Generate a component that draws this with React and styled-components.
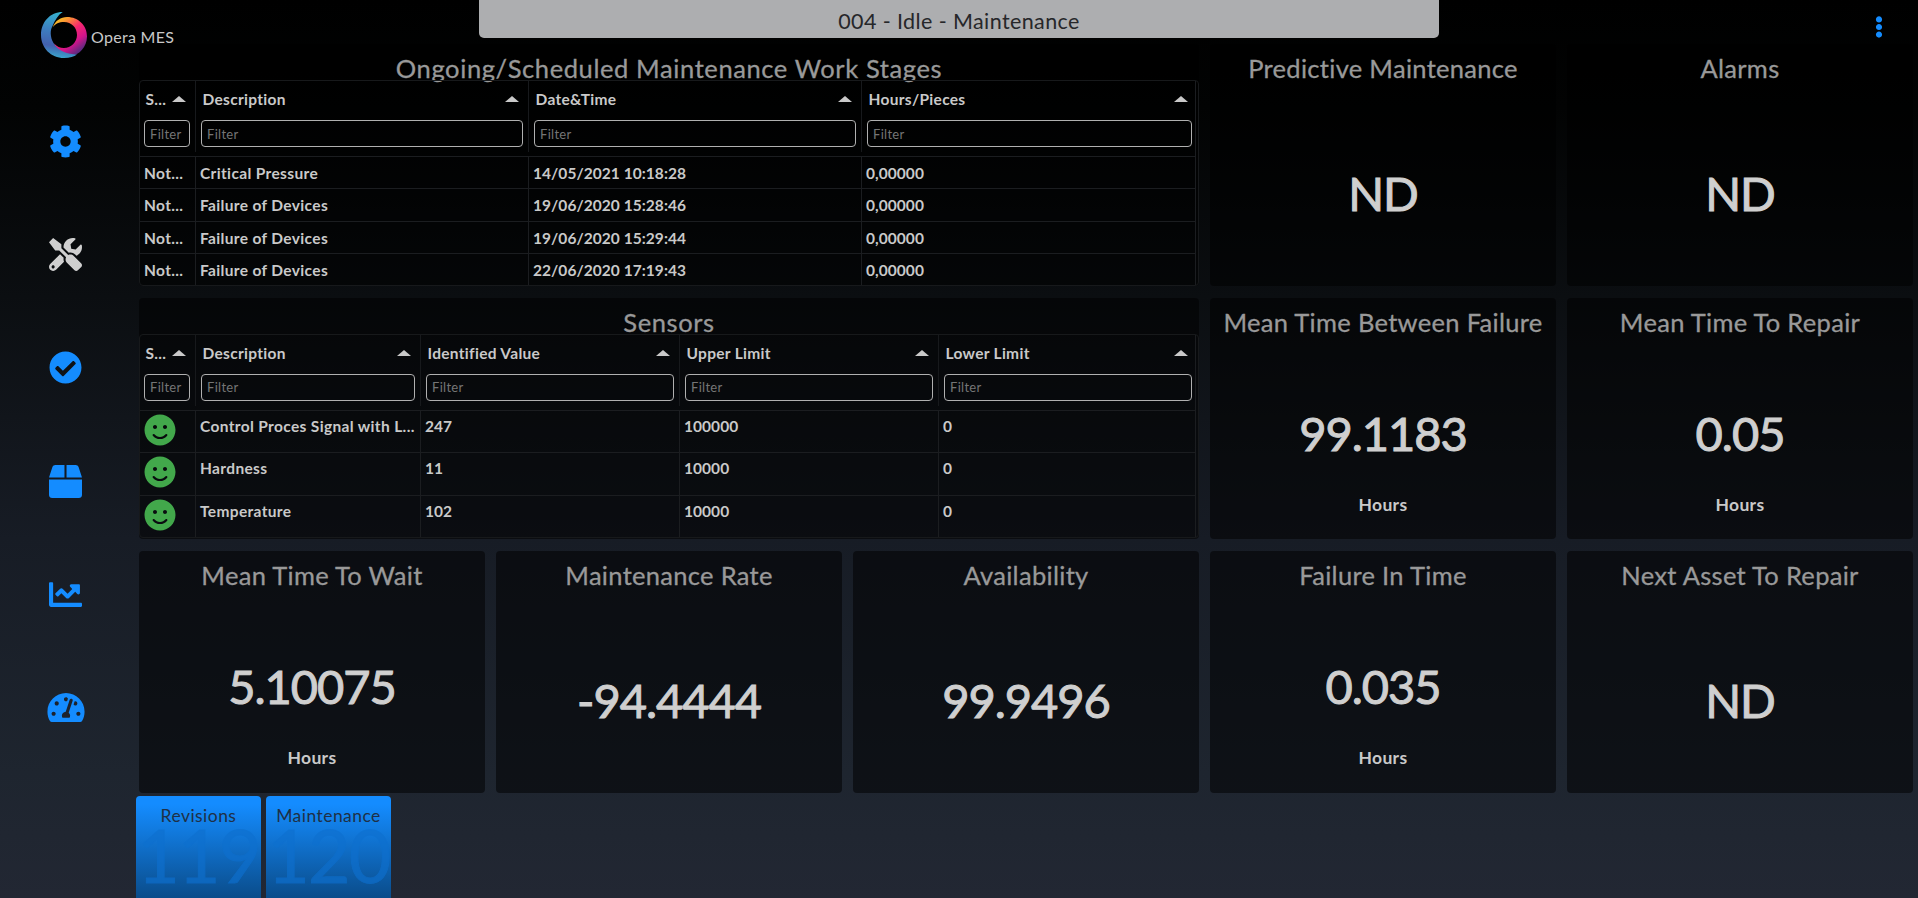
import React from 'react';
import styled, { createGlobalStyle } from 'styled-components';
import {
  FaCog,
  FaTools,
  FaCheckCircle,
  FaBox,
  FaChartLine,
  FaTachometerAlt,
  FaSmile,
  FaEllipsisV,
} from 'react-icons/fa';

const GlobalStyle = createGlobalStyle`
  * {
    box-sizing: border-box;
  }
  body {
    margin: 0;
    background: #000;
    font-family: Lato, 'Liberation Sans', sans-serif;
    color: #c9c9c9;
  }
`;

const Page = styled.div`
  display: grid;
  grid-template-columns: 136px 1fr;
  grid-template-rows: 44px 1fr;
  width: 100vw;
  height: 100vh;
  overflow: hidden;
  background: linear-gradient(180deg, #000 0%, #020303 12%, #0b0e11 33%, #171c25 60%, #1e252f 86%, #222733 100%);
`;

const Header = styled.header`
  grid-column: 1 / 3;
  display: grid;
  grid-template-columns: 1fr 960px 1fr;
  align-items: start;
`;

const Brand = styled.div`
  display: flex;
  align-items: flex-start;
  padding: 11px 0 0 40px;
`;

const BrandName = styled.span`
  margin: 16px 0 0 3px;
  font-size: 16px;
  line-height: 20px;
  letter-spacing: 0.3px;
`;

const StatusBar = styled.div`
  height: 38px;
  border-radius: 0 0 5px 5px;
  background: #adaeb0;
  color: #26272a;
  font-size: 21.5px;
  line-height: 43px;
  letter-spacing: 0.4px;
  text-align: center;
`;

const MenuButton = styled.button`
  justify-self: end;
  width: 22px;
  height: 22px;
  margin: 16px 28px 0 0;
  padding: 0;
  border: 0;
  background: none;
  color: #148cff;
  svg {
    display: block;
    width: 22px;
    height: 22px;
  }
`;

const Sidebar = styled.nav`
  display: flex;
  flex-direction: column;
  gap: 80.2px;
  padding: 81px 5px 0 0;
  align-items: center;
`;

const NavIcon = styled.a`
  display: flex;
  height: 33px;
  color: ${(props) => (props.$active ? '#cfcfcf' : '#148cff')};
  svg {
    width: ${(props) => (props.$wide ? '38px' : '33px')};
    height: 33px;
  }
`;

const Main = styled.main`
  display: flex;
  flex-direction: column;
`;

const Board = styled.div`
  display: grid;
  grid-template-columns: repeat(5, 346px);
  grid-template-rows: 242px 241.5px 242px;
  gap: 11.75px 11px;
  height: 749px;
  padding-left: 3px;
`;

const Card = styled.section`
  grid-column: span ${(props) => props.$span || 1};
  display: flex;
  flex-direction: column;
  align-items: center;
  min-width: 0;
  border-radius: 4px;
  background: rgba(0, 0, 0, 0.52);
`;

const CardTitle = styled.h2`
  height: 36px;
  margin: 0;
  font-size: 25.5px;
  font-weight: 400;
  line-height: 49px;
  letter-spacing: ${(props) => props.$spacing || 0.3}px;
  white-space: nowrap;
  color: #999;
  -webkit-text-stroke: 0.3px #999;
`;

const Value = styled.div`
  margin-top: ${(props) => (props.$hasUnit ? '69px' : '83px')};
  font-size: 47px;
  line-height: 60px;
  letter-spacing: -1px;
  color: #cfcfcf;
  -webkit-text-stroke: 1px #cfcfcf;
`;

const Unit = styled.div`
  margin-top: 30px;
  font-size: 17.5px;
  font-weight: 700;
  line-height: 24px;
  letter-spacing: 0.3px;
`;

const Table = styled.div`
  width: 100%;
  flex: 1;
  display: flex;
  flex-direction: column;
  margin-bottom: ${(props) => props.$bottom || 0}px;
  padding-right: 2px;
  border: 1px solid #17191b;
  border-radius: 4px;
`;

const TableRow = styled.div`
  display: grid;
  grid-template-columns: ${(props) => props.$columns};
  flex: 1;
  border-top: 1px solid #1b1d20;
  border-right: 1px solid #1b1d20;
`;

const HeadRow = styled(TableRow)`
  flex: none;
  height: 75px;
  border-top: 0;
`;

const HeadCell = styled.div`
  min-width: 0;
  margin-bottom: 4px;
  padding: 8px 5px 0;
  border-right: 1px solid #17191c;
  &:first-child {
    padding-left: 4px;
  }
  &:last-child {
    padding-right: 3px;
    border-right: 0;
  }
`;

const HeadLabel = styled.div`
  display: flex;
  align-items: center;
  justify-content: space-between;
  height: 20px;
  padding: 0 4px 0 1.5px;
  font-size: 15.5px;
  font-weight: 700;
  line-height: 20px;
  letter-spacing: 0.3px;
  white-space: nowrap;
`;

const SortArrow = styled.i`
  width: 0;
  height: 0;
  border: 7px solid transparent;
  border-top: 0;
  border-bottom: 6px solid #c9c9c9;
`;

const FilterInput = styled.input`
  display: block;
  width: 100%;
  height: 27px;
  margin-top: 11px;
  padding: 0 5px;
  border: 1px solid #b0b0b0;
  border-radius: 4px;
  background: transparent;
  font: 13px Lato, sans-serif;
  letter-spacing: 0.3px;
  &::placeholder {
    color: #757575;
    opacity: 1;
  }
`;

const Cell = styled.div`
  min-width: 0;
  padding: ${(props) => (props.$tall ? 5 : 6)}px 2px 0 4px;
  overflow: hidden;
  border-right: 1px solid #1b1d20;
  font-size: 15.5px;
  font-weight: 700;
  line-height: 20px;
  letter-spacing: ${(props) => (props.$numeric ? 0.05 : 0.35)}px;
  white-space: nowrap;
  text-overflow: ellipsis;
  &:last-child {
    border-right: 0;
  }
`;

const FaceCell = styled(Cell)`
  padding-top: 3px;
  svg {
    display: block;
    width: 32px;
    height: 32px;
    color: #42a84b;
  }
`;

const Tiles = styled.div`
  display: flex;
  gap: 5px;
  margin-top: 3px;
`;

const Tile = styled.div`
  display: flex;
  flex-direction: column;
  align-items: center;
  width: 125px;
  height: 102px;
  border-radius: 4px 4px 0 0;
  background: linear-gradient(180deg, #148cff 0%, #148cff 8%, #0a4c8a 100%);
`;

const TileLabel = styled.div`
  padding-top: 9px;
  font-size: 17.5px;
  line-height: 22px;
  letter-spacing: 0.45px;
  color: #1f3046;
`;

const TileCount = styled.div`
  margin-top: -4px;
  font-size: 73px;
  line-height: 64px;
  letter-spacing: -1.5px;
  color: #0e70cf;
  opacity: 0.65;
  -webkit-text-stroke: 1px #0e70cf;
`;

const navItems = [
  { icon: FaCog },
  { icon: FaTools, active: true },
  { icon: FaCheckCircle },
  { icon: FaBox },
  { icon: FaChartLine },
  { icon: FaTachometerAlt, wide: true },
];

const stageHeads = ['S...', 'Description', 'Date&Time', 'Hours/Pieces'];
const stages = [
  ['Not...', 'Critical Pressure', '14/05/2021 10:18:28', '0,00000'],
  ['Not...', 'Failure of Devices', '19/06/2020 15:28:46', '0,00000'],
  ['Not...', 'Failure of Devices', '19/06/2020 15:29:44', '0,00000'],
  ['Not...', 'Failure of Devices', '22/06/2020 17:19:43', '0,00000'],
];

const sensorHeads = ['S...', 'Description', 'Identified Value', 'Upper Limit', 'Lower Limit'];
const sensors = [
  ['Control Proces Signal with L...', '247', '100000', '0'],
  ['Hardness', '11', '10000', '0'],
  ['Temperature', '102', '10000', '0'],
];

const Logo = () => (
  <svg width="48" height="48" viewBox="0 0 48 48">
    <defs>
      <linearGradient id="blue" x1="0.6" y1="0" x2="0.5" y2="1">
        <stop offset="0" stopColor="#35b4cf" />
        <stop offset="0.4" stopColor="#3d7fc0" />
        <stop offset="0.75" stopColor="#4360ae" />
        <stop offset="1" stopColor="#3aa6cd" />
      </linearGradient>
      <linearGradient id="pink" x1="0" y1="0.1" x2="0.6" y2="1">
        <stop offset="0" stopColor="#f6d11f" />
        <stop offset="0.22" stopColor="#fb8a37" />
        <stop offset="0.48" stopColor="#f5276f" />
        <stop offset="0.75" stopColor="#d4148b" />
        <stop offset="1" stopColor="#5b2a80" />
      </linearGradient>
    </defs>
    <path fill="url(#pink)" d="M12.700 16.500C15 9.500 21 6 27 6C38.500 6 47 14.500 47 25.500C47 36 39 44 31 45C24 45 16 40 14 32.500C17 35.500 20 37 24 37C31 37 37 31 37 24C37 16.500 31.500 11 24 11C19 11 15.500 12.500 12.700 16.500Z" />
    <path fill="url(#blue)" d="M22.700 1C10 1 1 11 1 24C1 37 11 47 24 47C30 47 34 45.500 37 43.500C28 43.500 18 40 13.500 32C10 26 10 19 12.500 15C15 9 18 4 22.700 1Z" />
  </svg>
);

const TableHead = ({ heads, columns }) => (
  <HeadRow $columns={columns}>
    {heads.map((head) => (
      <HeadCell key={head}>
        <HeadLabel>
          {head}
          <SortArrow />
        </HeadLabel>
        <FilterInput placeholder="Filter" />
      </HeadCell>
    ))}
  </HeadRow>
);

const Kpi = ({ title, value, unit }) => (
  <Card>
    <CardTitle>{title}</CardTitle>
    <Value $hasUnit={Boolean(unit)}>{value}</Value>
    {unit && <Unit>{unit}</Unit>}
  </Card>
);

const App = () => {
  const stageColumns = '56px 333px 333px 1fr';
  const sensorColumns = '56px 225px 259px 259px 1fr';

  return (
    <Page>
      <GlobalStyle />
      <Header>
        <Brand>
          <Logo />
          <BrandName>Opera MES</BrandName>
        </Brand>
        <StatusBar>004 - Idle - Maintenance</StatusBar>
        <MenuButton>
          <FaEllipsisV />
        </MenuButton>
      </Header>
      <Sidebar>
        {navItems.map(({ icon: Icon, active, wide }, index) => (
          <NavIcon key={index} $active={active} $wide={wide}>
            <Icon />
          </NavIcon>
        ))}
      </Sidebar>
      <Main>
        <Board>
          <Card $span={3}>
            <CardTitle $spacing={0.6}>Ongoing/Scheduled Maintenance Work Stages</CardTitle>
            <Table>
              <TableHead heads={stageHeads} columns={stageColumns} />
              {stages.map((row, index) => (
                <TableRow key={index} $columns={stageColumns}>
                  {row.map((text, i) => (
                    <Cell key={i} $numeric={i > 1}>{text}</Cell>
                  ))}
                </TableRow>
              ))}
            </Table>
          </Card>
          <Kpi title="Predictive Maintenance" value="ND" />
          <Kpi title="Alarms" value="ND" />

          <Card $span={3}>
            <CardTitle $spacing={0.6}>Sensors</CardTitle>
            <Table $bottom={1}>
              <TableHead heads={sensorHeads} columns={sensorColumns} />
              {sensors.map((row, index) => (
                <TableRow key={index} $columns={sensorColumns}>
                  <FaceCell>
                    <FaSmile />
                  </FaceCell>
                  {row.map((text, i) => (
                    <Cell key={i} $tall $numeric={i > 0}>{text}</Cell>
                  ))}
                </TableRow>
              ))}
            </Table>
          </Card>
          <Kpi title="Mean Time Between Failure" value="99.1183" unit="Hours" />
          <Kpi title="Mean Time To Repair" value="0.05" unit="Hours" />

          <Kpi title="Mean Time To Wait" value="5.10075" unit="Hours" />
          <Kpi title="Maintenance Rate" value="-94.4444" />
          <Kpi title="Availability" value="99.9496" />
          <Kpi title="Failure In Time" value="0.035" unit="Hours" />
          <Kpi title="Next Asset To Repair" value="ND" />
        </Board>
        <Tiles>
          <Tile>
            <TileLabel>Revisions</TileLabel>
            <TileCount>119</TileCount>
          </Tile>
          <Tile>
            <TileLabel>Maintenance</TileLabel>
            <TileCount>120</TileCount>
          </Tile>
        </Tiles>
      </Main>
    </Page>
  );
};

export default App;
